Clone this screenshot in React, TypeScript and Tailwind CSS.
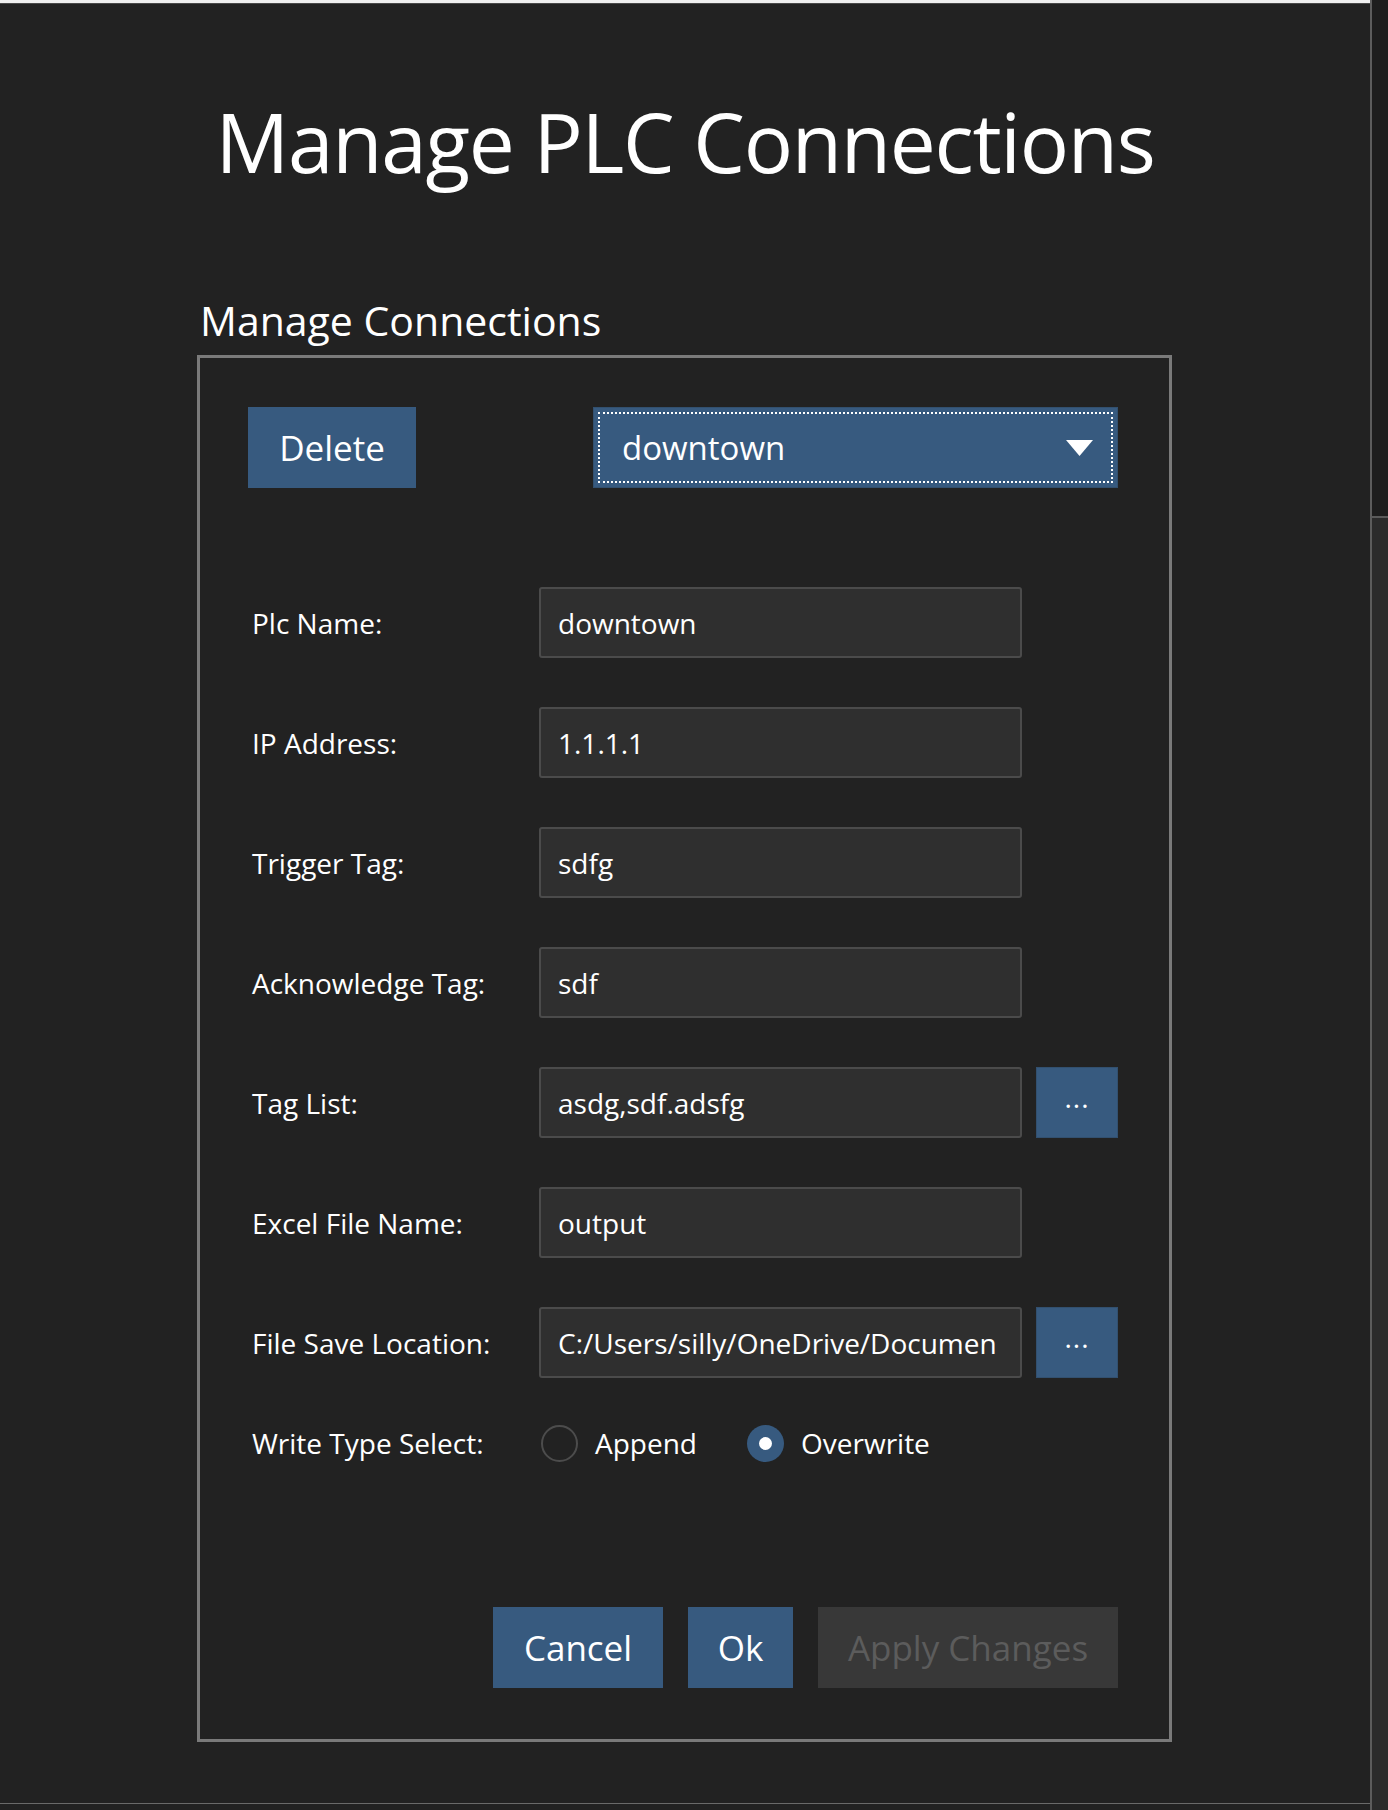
const fields = [
  { label: 'Plc Name:', value: 'downtown' },
  { label: 'IP Address:', value: '1.1.1.1' },
  { label: 'Trigger Tag:', value: 'sdfg' },
  { label: 'Acknowledge Tag:', value: 'sdf' },
  { label: 'Tag List:', value: 'asdg,sdf.adsfg', browse: true },
  { label: 'Excel File Name:', value: 'output' },
  { label: 'File Save Location:', value: 'C:/Users/silly/OneDrive/Documen', browse: true },
];

const font = { fontFamily: '"Open Sans", "Noto Sans", sans-serif' };

function BrowseButton() {
  return (
    <div className="flex h-[71px] w-[82px] items-center justify-center bg-[#375a7f] border border-[#32506f]">
      <span className="mb-[12px] text-[28px] leading-none tracking-[1px] text-white">...</span>
    </div>
  );
}

function Radio({ label, checked }: { label: string; checked?: boolean }) {
  return (
    <div className="flex items-center">
      {checked ? (
        <span className="flex h-[37px] w-[37px] items-center justify-center rounded-full bg-[#375a7f]">
          <span className="h-[13px] w-[13px] rounded-full bg-white" />
        </span>
      ) : (
        <span className="h-[37px] w-[37px] rounded-full border-2 border-[#4c4c4c]" />
      )}
      <span className="ml-[17px] text-[28px] leading-none text-white">{label}</span>
    </div>
  );
}

export default function App() {
  return (
    <div className="flex h-[1810px] w-[1388px] overflow-hidden bg-[#222222]" style={font}>
      <main className="flex w-[1370px] flex-col bg-[#222222] text-white">
        <div className="h-[3px] bg-[#f0f0f0]" />
        <div className="h-px bg-[#4a4a4a]" />

        {/* Title */}
        <h1 className="mt-[96px] text-center text-[82px] leading-none tracking-[-1.3px] text-white">
          Manage PLC Connections
        </h1>

        <div className="ml-[200px] mt-[118px] text-[41px] leading-none text-white">Manage Connections</div>

        {/* Group box */}
        <section className="ml-[197px] mt-[14px] h-[1387px] w-[975px] border-[3px] border-[#7a7a7a] pl-[48px] pt-[49px]">
          <div className="w-[870px]">
            {/* Top row */}
            <div className="flex h-[81px]">
              <div className="flex w-[168px] items-center justify-center bg-[#375a7f] text-[35px] leading-none text-white">
                Delete
              </div>
              <div className="ml-auto flex w-[525px] bg-[#375a7f] p-[4px] border border-[#32506f]">
                <div className="flex flex-1 items-center border-2 border-dotted border-white pl-[22px] pr-[18px]">
                  <span className="text-[33px] leading-none text-white">downtown</span>
                  <svg className="ml-auto" width="27" height="16" viewBox="0 0 27 16">
                    <polygon points="0,0 27,0 13.5,16" fill="#ffffff" />
                  </svg>
                </div>
              </div>
            </div>

            {/* Fields */}
            <div className="ml-[4px] mt-[99px] flex flex-col gap-[49px]">
              {fields.map((f) => (
                <div key={f.label} className="flex h-[71px] items-center">
                  <span className="w-[287px] text-[28px] leading-none text-white">{f.label}</span>
                  <div className="flex h-[71px] w-[483px] items-center overflow-hidden whitespace-nowrap rounded-[3px] border-2 border-[#4b4b4b] bg-[#2f2f2f] pl-[17px] pr-[8px]">
                    <span className="text-[28px] leading-none text-white">{f.value}</span>
                  </div>
                  {f.browse && (
                    <div className="ml-[14px]">
                      <BrowseButton />
                    </div>
                  )}
                </div>
              ))}

              <div className="flex h-[32px] items-center">
                <span className="w-[287px] text-[28px] leading-none text-white">Write Type Select:</span>
                <div className="ml-[2px] flex items-center gap-[50px]">
                  <Radio label="Append" />
                  <Radio label="Overwrite" checked />
                </div>
              </div>
            </div>

            {/* Actions */}
            <div className="mt-[148px] flex h-[81px] justify-end gap-[25px]">
              <div className="flex w-[170px] items-center justify-center bg-[#375a7f] text-[35px] leading-none text-white">
                Cancel
              </div>
              <div className="flex w-[105px] items-center justify-center bg-[#375a7f] text-[35px] leading-none text-white">
                Ok
              </div>
              <div className="flex w-[300px] items-center justify-center bg-[#383838] text-[35px] leading-none text-[#5c5c5c]">
                Apply Changes
              </div>
            </div>
          </div>
        </section>

        <div className="flex-1" />
        <div className="h-px bg-[#6a6a6a]" />
        <div className="h-[6px]" />
      </main>

      {/* Scrollbar strip */}
      <aside className="flex w-[18px] flex-col border-l-2 border-[#5c5c5c]">
        <div className="h-[516px] bg-[#1d1d1d]" />
        <div className="h-[2px] bg-[#5a5a5a]" />
        <div className="flex-1 bg-[#2b2b2b]" />
      </aside>
    </div>
  );
}
